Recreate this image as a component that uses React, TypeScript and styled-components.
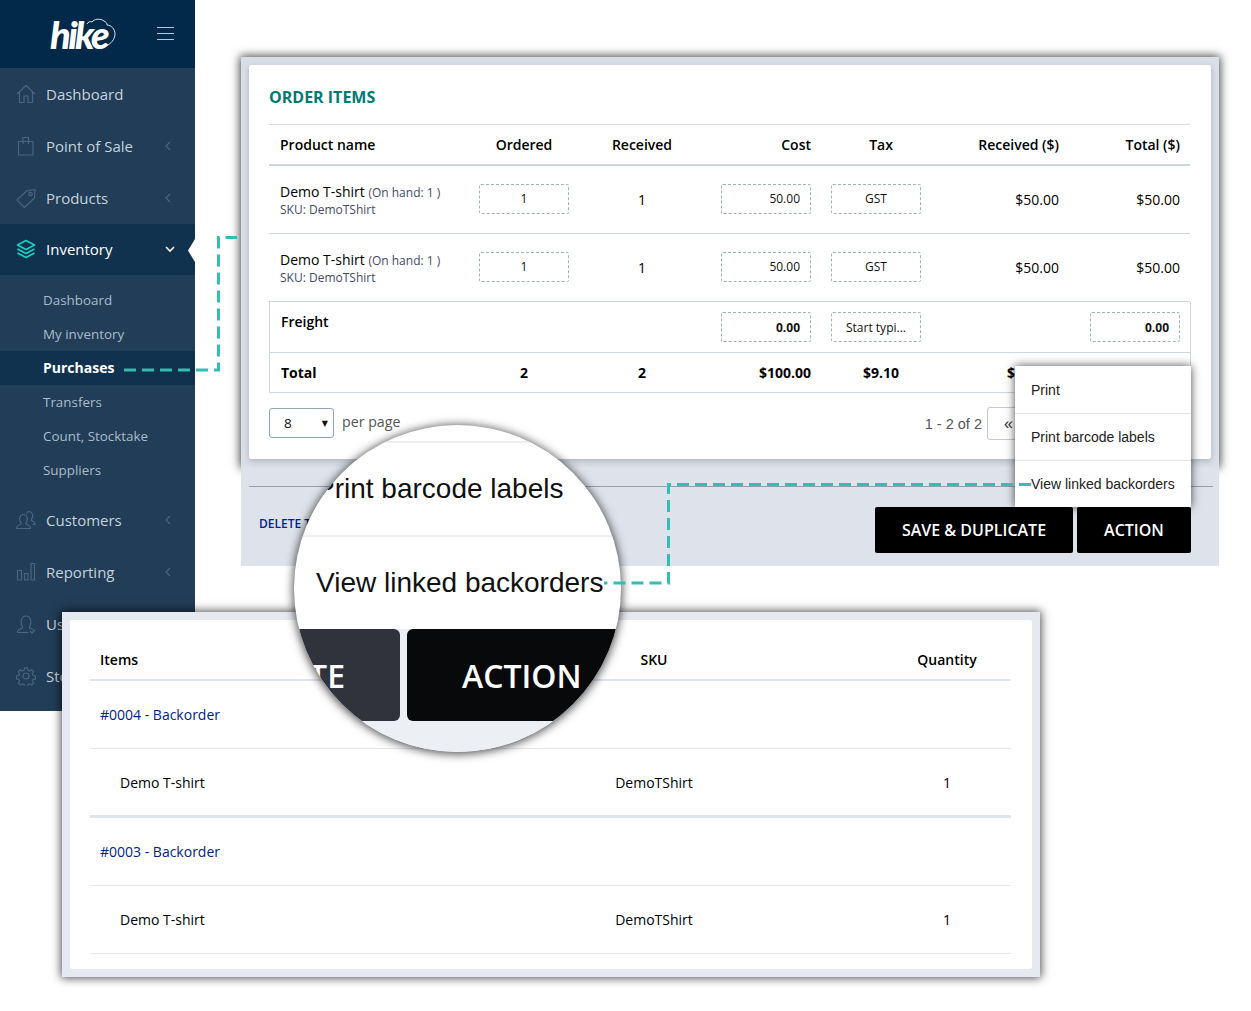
import { createGlobalStyle, styled } from 'styled-components';
import type { ReactNode } from 'react';

const GlobalStyle = createGlobalStyle`
    html, body {
        margin: 0;
        padding: 0;
        background: #fff;
        font-family: 'Open Sans', 'Liberation Sans', sans-serif;
    }
    * {
        box-sizing: border-box;
    }
`;

const Collage = styled.div`
    position: relative;
    width: 1251px;
    height: 1011px;
    overflow: hidden;
    background: #fff;
`;

/* sidebar */
const Sidebar = styled.nav`
    width: 195px;
    height: 711px;
    background: #213d57;
    display: flex;
    flex-direction: column;
`;

const SideHeader = styled.div`
    height: 68px;
    background: #03294a;
    display: flex;
    align-items: center;
    padding: 0 21px 0 50px;
    justify-content: space-between;
`;

const Logo = styled.div`
    position: relative;
    width: 68px;
    height: 40px;
    display: flex;
    align-items: center;
`;

const LogoText = styled.span`
    font-family: 'Lato', 'Open Sans', sans-serif;
    font-weight: 900;
    font-style: italic;
    font-size: 38px;
    line-height: 40px;
    letter-spacing: -2.6px;
    color: #fff;
`;

const LogoCloud = styled.svg`
    position: absolute;
    left: 29px;
    top: 3px;
    width: 40px;
    height: 32px;
    fill: none;
    stroke: #dfe6eb;
    stroke-width: 1;
`;

const Burger = styled.div`
    width: 17px;
    margin-bottom: 2px;
    display: flex;
    flex-direction: column;
    gap: 5px;
    span {
        display: block;
        height: 1px;
        background: #b9c7d2;
    }
`;

const MenuRow = styled.div<{ $active?: boolean }>`
    position: relative;
    height: ${p => (p.$active ? '51px' : '52px')};
    padding: 0 ${p => (p.$active ? '20px' : '22px')} ${p => (p.$active ? '2px' : '0')} 16px;
    display: flex;
    align-items: center;
    gap: 10px;
    font-size: 15px;
    color: ${p => (p.$active ? '#fff' : '#c6d2dc')};
    background: ${p => (p.$active ? '#11324f' : 'transparent')};
`;

const MenuLabel = styled.span`
    flex: 1;
`;

const Notch = styled.div`
    position: absolute;
    right: 0;
    top: 15px;
    width: 7px;
    height: 23px;
    background: #fff;
    clip-path: polygon(100% 0, 0 50%, 100% 100%);
`;

const Icon = styled.svg<{ $teal?: boolean }>`
    width: 20px;
    height: 20px;
    flex: none;
    fill: none;
    stroke: ${p => (p.$teal ? '#17d3c4' : '#4a6483')};
    stroke-width: ${p => (p.$teal ? 1.6 : 1.2)};
    stroke-linejoin: round;
`;

const Chevron = styled.svg<{ $open?: boolean }>`
    width: 10px;
    height: 10px;
    flex: none;
    fill: none;
    stroke: ${p => (p.$open ? '#fff' : '#4a6483')};
    stroke-width: ${p => (p.$open ? 1.6 : 1.2)};
`;

const SubMenu = styled.div`
    padding: 8px 0 7px;
    display: flex;
    flex-direction: column;
`;

const SubItem = styled.div<{ $current?: boolean }>`
    height: 34px;
    padding: 0 0 ${p => (p.$current ? '2px' : '0')} 43px;
    display: flex;
    align-items: center;
    font-size: ${p => (p.$current ? '14px' : '13.4px')};
    font-weight: ${p => (p.$current ? 700 : 400)};
    color: ${p => (p.$current ? '#fff' : '#a9bccb')};
    background: ${p => (p.$current ? '#11324f' : 'transparent')};
`;

/* order window */
const OrderWindow = styled.section`
    position: absolute;
    left: 241px;
    top: 57px;
    width: 978px;
`;

const Frame = styled.div`
    height: 410px;
    padding: 8px;
    background: #d9dee7;
    box-shadow: 0 0 9px 1px rgba(0, 0, 0, 0.75);
`;

const Card = styled.div`
    height: 394px;
    background: #fff;
    border-radius: 2px;
    padding: 20px 20px 0;
    box-shadow: 0 2px 6px rgba(0, 0, 0, 0.2);
`;

const Heading = styled.h2`
    margin: 0;
    height: 39px;
    line-height: 24px;
    font-size: 16px;
    font-weight: 700;
    color: #007a72;
`;

const DashedInput = styled.div<{ $align?: 'center' | 'right'; $bold?: boolean }>`
    width: 90px;
    height: 30px;
    border: 1px dashed #9db5b1;
    border-radius: 2px;
    padding: 0 10px;
    display: flex;
    align-items: center;
    justify-content: ${p => (p.$align === 'right' ? 'flex-end' : 'center')};
    font-size: 12px;
    font-weight: ${p => (p.$bold ? 700 : 400)};
    color: #111;
`;

const OrderGrid = styled.div<{ $boxed?: boolean }>`
    display: grid;
    grid-template-columns: ${p =>
        p.$boxed ? '199px 110px 126px 116px 110px 138px 121px' : '200px 110px 126px 116px 110px 138px 121px'};
    width: ${p => (p.$boxed ? '920px' : '921px')};
    align-items: center;
    font-size: 14px;
    color: #000;
`;

const HeadRow = styled(OrderGrid)`
    height: 42px;
    border-top: 1px solid #d8dde2;
    border-bottom: 2px solid #cdd6de;
    font-weight: 600;
`;

const ItemRow = styled(OrderGrid)`
    height: 68px;
    border-bottom: 1px solid #cdd6de;
    ${DashedInput} {
        margin-bottom: 2px;
    }
`;

const Cell = styled.div<{ $align?: 'left' | 'center' | 'right'; $nudge?: number }>`
    display: flex;
    justify-content: ${p => (p.$align === 'right' ? 'flex-end' : p.$align === 'center' ? 'center' : 'flex-start')};
    padding: 0 10px 0 ${p => p.$nudge ?? 10}px;
`;

const ProductCell = styled.div`
    padding: 0 0 0 11px;
`;

const ProductText = styled.div`
    padding-top: 1px;
`;

const ProductName = styled.div`
    font-size: 14px;
    line-height: 18px;
    color: #000;
    small {
        font-size: 12px;
        color: #454b68;
    }
`;

const ProductSku = styled.div`
    font-size: 12px;
    line-height: 16px;
    color: #454b68;
`;

const TotalsBox = styled.div`
    width: 922px;
    border: 1px solid #cdd6de;
    border-top: 0;
`;

const FreightRow = styled(OrderGrid)`
    height: 51px;
    align-items: flex-start;
    padding-top: 10px;
    border-bottom: 1px solid #cdd6de;
    font-weight: 600;
`;

const RowLabel = styled.div`
    padding: 0 0 0 11px;
    line-height: 20px;
`;

const TotalRow = styled(OrderGrid)`
    height: 39px;
    font-weight: 700;
`;

const PagingRow = styled.div`
    margin-top: 14px;
    width: 922px;
    display: flex;
    align-items: center;
    justify-content: space-between;
`;

const PerPage = styled.div`
    display: flex;
    align-items: center;
    gap: 8px;
    font-size: 14.2px;
    color: #555;
`;

const PerPageText = styled.span`
    padding-bottom: 5px;
`;

const SelectBox = styled.div`
    width: 65px;
    height: 30px;
    margin-bottom: 1px;
    border: 1px solid #93a9b1;
    border-radius: 3px;
    padding: 0 5px 0 14px;
    display: flex;
    align-items: center;
    justify-content: space-between;
    font-size: 13.5px;
    color: #111;
    i {
        font-style: normal;
        font-size: 8px;
        font-family: 'DejaVu Sans', sans-serif;
    }
`;

const Pager = styled.div`
    display: flex;
    align-items: center;
    gap: 5px;
    font-family: 'Liberation Sans', sans-serif;
    font-size: 14.5px;
    color: #555;
`;

const PagerButtons = styled.div`
    width: 204px;
    height: 33px;
    border: 1px solid #c2c8cc;
    border-radius: 3px;
    padding-left: 16px;
    display: flex;
    align-items: center;
    font-size: 16px;
    color: #333;
`;

const Footer = styled.div`
    position: relative;
    height: 99px;
    background: #dee2ea;
    padding: 19px 6px 0 8px;
`;

const FooterRule = styled.div`
    height: 1px;
    background: #9a9ea5;
`;

const FooterBar = styled.div`
    margin: 20px 22px 0 10px;
    display: flex;
    align-items: flex-start;
    justify-content: space-between;
`;

const DeleteLink = styled.a`
    font-size: 12px;
    line-height: 16px;
    font-weight: 600;
    color: #00238a;
    white-space: nowrap;
    margin-top: 9px;
`;

const FooterButtons = styled.div`
    display: flex;
    gap: 4px;
`;

const BlackButton = styled.button<{ $wide?: boolean }>`
    width: ${p => (p.$wide ? '198px' : '114px')};
    height: 46px;
    border: 0;
    border-radius: 2px;
    background: #000;
    color: #fff;
    font-family: inherit;
    font-size: 16px;
    font-weight: 600;
`;

/* menu opened from ACTION */
const ActionMenu = styled.ul`
    position: absolute;
    left: 774px;
    top: 309px;
    width: 176px;
    height: 141px;
    margin: 0;
    padding: 0;
    list-style: none;
    background: #fff;
    box-shadow: 0 0 9px rgba(0, 0, 0, 0.7);
`;

const ActionItem = styled.li`
    height: 47px;
    padding-left: 16px;
    display: flex;
    align-items: center;
    font-family: 'Liberation Sans', sans-serif;
    font-size: 14px;
    color: #222;
    & + & {
        border-top: 1px solid #e4e4e4;
    }
`;

/* backorder window */
const BackorderWindow = styled.section`
    position: absolute;
    left: 62px;
    top: 612px;
    width: 978px;
    height: 365px;
    padding: 8px;
    background: #e6e9ef;
    box-shadow: 0 0 9px 1px rgba(0, 0, 0, 0.7);
`;

const BackorderCard = styled.div`
    height: 349px;
    background: #fff;
    border-radius: 2px;
    padding: 0 21px 0 20px;
`;

const BackorderGrid = styled.div`
    display: grid;
    grid-template-columns: 474px 180px 139px 128px;
    align-items: center;
    font-size: 14px;
    color: #000;
`;

const BackorderHead = styled(BackorderGrid)`
    height: 61px;
    align-items: end;
    padding-bottom: 10px;
    border-bottom: 2px solid #e0e5ec;
    font-weight: 600;
`;

const BackorderRow = styled(BackorderGrid)<{ $thick?: boolean }>`
    height: ${p => (p.$thick ? '69px' : '68px')};
    border-bottom: ${p => (p.$thick ? '3px' : '1px')} solid ${p => (p.$thick ? '#dfe5ec' : '#e4e7ec')};
`;

const HeadLabel = styled.div`
    padding-left: 10px;
`;

const OrderLink = styled.a`
    padding-left: 10px;
    color: #00238a;
    grid-column: 1 / -1;
`;

const ItemName = styled.div`
    padding-left: 30px;
`;

const Centered = styled.div`
    text-align: center;
`;

/* dashed connectors */
const Connectors = styled.svg`
    position: absolute;
    left: 0;
    top: 0;
    width: 1251px;
    height: 1011px;
    fill: none;
    stroke: #36bcb3;
    stroke-width: 3;
    stroke-dasharray: 12 6;
    pointer-events: none;
`;

/* magnifier */
const Lens = styled.div`
    position: absolute;
    left: 294px;
    top: 425px;
    width: 327px;
    height: 327px;
    border-radius: 50%;
    overflow: hidden;
    background: #fff;
    box-shadow: 0 1px 10px 1px rgba(0, 0, 0, 0.7);
    display: flex;
    flex-direction: column;
`;

const LensTop = styled.div`
    height: 18px;
    flex: none;
    border-bottom: 2px solid #eee;
`;

const LensRow = styled.div<{ $ruled?: boolean }>`
    height: ${p => (p.$ruled ? '94px' : '92px')};
    flex: none;
    padding-left: 22px;
    display: flex;
    align-items: center;
    font-family: 'Liberation Sans', sans-serif;
    font-size: 28px;
    color: #111;
    white-space: nowrap;
    border-bottom: ${p => (p.$ruled ? '2px solid #eee' : '0')};
`;

const LensButtons = styled.div`
    flex: 1;
    display: flex;
    gap: 7px;
    background: #eceff4;
`;

const LensButton = styled.div<{ $muted?: boolean }>`
    flex: none;
    width: ${p => (p.$muted ? '106px' : '228px')};
    height: 92px;
    border-radius: 6px;
    padding: ${p => (p.$muted ? '0 55px 0 0' : '0 0 0 55px')};
    display: flex;
    align-items: center;
    justify-content: ${p => (p.$muted ? 'flex-end' : 'flex-start')};
    background: ${p => (p.$muted ? '#30333b' : '#08090b')};
    color: #fff;
    font-size: 32px;
    font-weight: 600;
    white-space: nowrap;
`;

function MenuIcon({ children, teal }: { children: ReactNode; teal?: boolean }) {
    return (
        <Icon viewBox="0 0 20 20" $teal={teal}>
            {children}
        </Icon>
    );
}

const menuTop = [
    { label: 'Dashboard', arrow: false, icon: <path d="M1 10 10 1.5 19 10M3.5 8v10.5h4.5V12h4v6.5h4.5V8" /> },
    { label: 'Point of Sale', arrow: true, icon: <path d="M2.5 5.5h14.5V19H2.5zM7 8V1.5h5.5V8" /> },
    {
        label: 'Products',
        arrow: true,
        icon: (
            <>
                <path d="M1 12 10.5 3 19 1.5 18.5 10 8.5 19.5Z" />
                <circle cx="14.5" cy="6" r="1.7" />
            </>
        ),
    },
];

const menuBottom = [
    {
        label: 'Customers',
        icon: <path d="M.5 18.5c0-3 2-3.5 4.5-4.5.5-1-.5-1.5-1-3-.7-2-.5-6.5 3.5-6.5s4.2 4.500 3.500 6.500c-.5 1.500-1.500 2-1 3 2.500 1 4.500 1.500 4.500 4.500ZM10.500 3.500c.5-1.500 1.500-2 2.500-2 3.500 0 4 4 3.300 6-.4 1.300-1.300 2-.8 3 2 .8 3.500 1.500 3.500 4h-2.500" />,
    },
    {
        label: 'Reporting',
        icon: <path d="M1.5 8.5h4V18h-4zM8.5 11.5H12V18H8.5zM15 1.5h3.5V18H15z" />,
    },
    {
        label: 'Users',
        icon: <path d="M1.5 18.5c0-3 2.5-3.5 5-4.500.5-1-.5-1.500-1-3-.8-2.500-.5-9 4.500-9s5.300 6.500 4.500 9c-.5 1.500-1.500 2-1 3 1.500.6 2.500.8 3.500 1.500M1.500 18.500h11M14 17l2 2 3-3.500" />,
    },
    {
        label: 'Store',
        icon: (
            <>
                <path d="M8.5 1.5h3l.5 2.5 1.800.8 2.200-1.400 2.100 2.100-1.400 2.200.8 1.800 2.500.5v3l-2.500.5-.8 1.800 1.400 2.200-2.100 2.100-2.200-1.400-1.800.8-.5 2.500h-3l-.5-2.500-1.800-.8-2.200 1.400-2.100-2.100 1.400-2.200-.8-1.800-2.500-.5v-3l2.500-.5.8-1.800-1.400-2.200 2.100-2.100 2.200 1.400 1.800-.8Z" transform="translate(.5 .5) scale(.95)" />
                <circle cx="10" cy="10" r="3" />
            </>
        ),
    },
];

const subItems = ['Dashboard', 'My inventory', 'Purchases', 'Transfers', 'Count, Stocktake', 'Suppliers'];

function BackChevron() {
    return (
        <Chevron viewBox="0 0 10 10">
            <path d="M7 1 3 5l4 4" />
        </Chevron>
    );
}

function OrderItem() {
    return (
        <ItemRow>
            <ProductCell>
                <ProductText>
                    <ProductName>
                        Demo T-shirt <small>(On hand: 1 )</small>
                    </ProductName>
                    <ProductSku>SKU: DemoTShirt</ProductSku>
                </ProductText>
            </ProductCell>
            <Cell $align="center">
                <DashedInput>1</DashedInput>
            </Cell>
            <Cell $align="center">1</Cell>
            <Cell $align="right">
                <DashedInput $align="right">50.00</DashedInput>
            </Cell>
            <Cell $align="center">
                <DashedInput>GST</DashedInput>
            </Cell>
            <Cell $align="right">$50.00</Cell>
            <Cell $align="right">$50.00</Cell>
        </ItemRow>
    );
}

export default function App() {
    return (
        <Collage>
            <GlobalStyle />
            <Sidebar>
                <SideHeader>
                    <Logo>
                        <LogoText>hike</LogoText>
                        <LogoCloud viewBox="0 0 40 32">
                            <path d="M8 7c1-2 3-3 5-2 2-3 8-4 12-1 2 1 3 2 3 4 4 0 8 4 8 9 0 5-4 10-9 12" />
                        </LogoCloud>
                    </Logo>
                    <Burger>
                        <span />
                        <span />
                        <span />
                    </Burger>
                </SideHeader>
                {menuTop.map(item => (
                    <MenuRow key={item.label}>
                        <MenuIcon>{item.icon}</MenuIcon>
                        <MenuLabel>{item.label}</MenuLabel>
                        {item.arrow && <BackChevron />}
                    </MenuRow>
                ))}
                <MenuRow $active>
                    <MenuIcon teal>
                        <path d="M10 1.5 18.5 6 10 10.5 1.5 6ZM1.5 10 10 14.5 18.5 10M1.5 14 10 18.5 18.5 14" />
                    </MenuIcon>
                    <MenuLabel>Inventory</MenuLabel>
                    <Chevron viewBox="0 0 10 10" $open>
                        <path d="M1 3l4 4 4-4" />
                    </Chevron>
                    <Notch />
                </MenuRow>
                <SubMenu>
                    {subItems.map(label => (
                        <SubItem key={label} $current={label === 'Purchases'}>
                            {label}
                        </SubItem>
                    ))}
                </SubMenu>
                {menuBottom.map(item => (
                    <MenuRow key={item.label}>
                        <MenuIcon>{item.icon}</MenuIcon>
                        <MenuLabel>{item.label}</MenuLabel>
                        <BackChevron />
                    </MenuRow>
                ))}
            </Sidebar>

            <OrderWindow>
                <Frame>
                    <Card>
                        <Heading>ORDER ITEMS</Heading>
                        <HeadRow>
                            <ProductCell>Product name</ProductCell>
                            <Cell $align="center">Ordered</Cell>
                            <Cell $align="center">Received</Cell>
                            <Cell $align="right">Cost</Cell>
                            <Cell $align="center" $nudge={20}>Tax</Cell>
                            <Cell $align="right">Received ($)</Cell>
                            <Cell $align="right">Total ($)</Cell>
                        </HeadRow>
                        <OrderItem />
                        <OrderItem />
                        <TotalsBox>
                            <FreightRow $boxed>
                                <RowLabel>Freight</RowLabel>
                                <div />
                                <div />
                                <Cell $align="right">
                                    <DashedInput $align="right" $bold>0.00</DashedInput>
                                </Cell>
                                <Cell $align="center">
                                    <DashedInput>Start typi...</DashedInput>
                                </Cell>
                                <div />
                                <Cell $align="right">
                                    <DashedInput $align="right" $bold>0.00</DashedInput>
                                </Cell>
                            </FreightRow>
                            <TotalRow $boxed>
                                <RowLabel>Total</RowLabel>
                                <Cell $align="center">2</Cell>
                                <Cell $align="center">2</Cell>
                                <Cell $align="right">$100.00</Cell>
                                <Cell $align="center" $nudge={20}>$9.10</Cell>
                                <Cell $align="right">$100.00</Cell>
                                <Cell $align="right">$109.10</Cell>
                            </TotalRow>
                        </TotalsBox>
                        <PagingRow>
                            <PerPage>
                                <SelectBox>
                                    8<i>▼</i>
                                </SelectBox>
                                <PerPageText>per page</PerPageText>
                            </PerPage>
                            <Pager>
                                1 - 2 of 2
                                <PagerButtons>«</PagerButtons>
                            </Pager>
                        </PagingRow>
                    </Card>
                </Frame>
                <Footer>
                    <FooterRule />
                    <FooterBar>
                        <DeleteLink>DELETE THIS ORDER</DeleteLink>
                        <FooterButtons>
                            <BlackButton $wide>SAVE &amp; DUPLICATE</BlackButton>
                            <BlackButton>ACTION</BlackButton>
                        </FooterButtons>
                    </FooterBar>
                </Footer>
                <ActionMenu>
                    <ActionItem>Print</ActionItem>
                    <ActionItem>Print barcode labels</ActionItem>
                    <ActionItem>View linked backorders</ActionItem>
                </ActionMenu>
            </OrderWindow>

            <BackorderWindow>
                <BackorderCard>
                    <BackorderHead>
                        <HeadLabel>Items</HeadLabel>
                        <Centered>SKU</Centered>
                        <div />
                        <Centered>Quantity</Centered>
                    </BackorderHead>
                    <BackorderRow>
                        <OrderLink>#0004 - Backorder</OrderLink>
                    </BackorderRow>
                    <BackorderRow $thick>
                        <ItemName>Demo T-shirt</ItemName>
                        <Centered>DemoTShirt</Centered>
                        <div />
                        <Centered>1</Centered>
                    </BackorderRow>
                    <BackorderRow>
                        <OrderLink>#0003 - Backorder</OrderLink>
                    </BackorderRow>
                    <BackorderRow>
                        <ItemName>Demo T-shirt</ItemName>
                        <Centered>DemoTShirt</Centered>
                        <div />
                        <Centered>1</Centered>
                    </BackorderRow>
                </BackorderCard>
            </BackorderWindow>

            <Lens>
                <LensTop />
                <LensRow $ruled>Print barcode labels</LensRow>
                <LensRow>View linked backorders</LensRow>
                <LensButtons>
                    <LensButton $muted>SAVE &amp; DUPLICATE</LensButton>
                    <LensButton>ACTION</LensButton>
                </LensButtons>
            </Lens>

            <Connectors viewBox="0 0 1251 1011">
                <path d="M124 370H218.5V237.5H237" />
                <path d="M1031 484.5H668.5V583H604" />
            </Connectors>
        </Collage>
    );
}
